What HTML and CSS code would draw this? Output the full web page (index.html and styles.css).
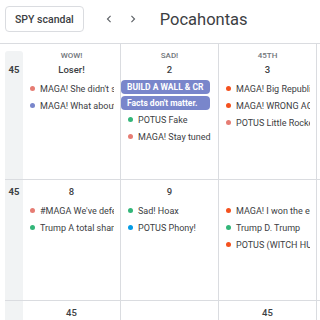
FILE: index.html
```html
<!DOCTYPE html>
<html lang="en">
<head>
    <meta charset="UTF-8">
    <meta name="viewport" content="width=device-width, initial-scale=1.0">
    <title>Calendar</title>
    <link rel="stylesheet" href="styles.css">
</head>
<body>
    <header class="toolbar">
        <button class="today-btn">SPY scandal</button>
        <div class="nav">
            <button class="icon-btn" aria-label="Previous">
                <svg viewBox="0 0 24 24" width="14" height="14"><path d="M15.41 7.41L14 6l-6 6 6 6 1.41-1.41L10.83 12z"/></svg>
            </button>
            <button class="icon-btn" aria-label="Next">
                <svg viewBox="0 0 24 24" width="14" height="14"><path d="M8.59 16.59L10 18l6-6-6-6-1.41 1.41L13.17 12z"/></svg>
            </button>
        </div>
        <h1 class="title">Pocahontas</h1>
    </header>

    <div class="month">
        <div class="week week-first">
            <div class="weeknum">45</div>
            <div class="day">
                <div class="dow">WOW!</div>
                <div class="date">Loser!</div>
                <div class="events">
                    <div class="event"><span class="dot flamingo"></span>MAGA! She didn't see it coming</div>
                    <div class="event"><span class="dot lavender"></span>MAGA! What about the emails</div>
                </div>
            </div>
            <div class="day">
                <div class="dow">SAD!</div>
                <div class="date">2</div>
                <div class="events">
                    <div class="chip">BUILD A WALL &amp; CR</div>
                    <div class="chip">Facts don't matter.</div>
                    <div class="event"><span class="dot basil"></span>POTUS Fake</div>
                    <div class="event"><span class="dot flamingo"></span>MAGA! Stay tuned</div>
                </div>
            </div>
            <div class="day">
                <div class="dow">45TH</div>
                <div class="date">3</div>
                <div class="events">
                    <div class="event"><span class="dot tangerine"></span>MAGA! Big Republican win</div>
                    <div class="event"><span class="dot tangerine"></span>MAGA! WRONG AGAIN</div>
                    <div class="event"><span class="dot flamingo"></span>POTUS Little Rocket Man</div>
                </div>
            </div>
            <div class="day"></div>
            <div class="day"></div>
            <div class="day"></div>
            <div class="day"></div>
        </div>

        <div class="week">
            <div class="weeknum">45</div>
            <div class="day">
                <div class="date">8</div>
                <div class="events">
                    <div class="event"><span class="dot flamingo"></span>#MAGA We've defeated them</div>
                    <div class="event"><span class="dot basil"></span>Trump A total sham</div>
                </div>
            </div>
            <div class="day">
                <div class="date">9</div>
                <div class="events">
                    <div class="event"><span class="dot basil"></span>Sad! Hoax</div>
                    <div class="event"><span class="dot peacock"></span>POTUS Phony!</div>
                </div>
            </div>
            <div class="day">
                <div class="date">&nbsp;</div>
                <div class="events">
                    <div class="event"><span class="dot tangerine"></span>MAGA! I won the election</div>
                    <div class="event"><span class="dot basil"></span>Trump D. Trump</div>
                    <div class="event"><span class="dot tangerine"></span>POTUS (WITCH HUNT!)</div>
                </div>
            </div>
            <div class="day"></div>
            <div class="day"></div>
            <div class="day"></div>
            <div class="day"></div>
        </div>

        <div class="week">
            <div class="weeknum"></div>
            <div class="day"><div class="date">45</div></div>
            <div class="day"></div>
            <div class="day"><div class="date">45</div></div>
            <div class="day"></div>
            <div class="day"></div>
            <div class="day"></div>
            <div class="day"></div>
        </div>
    </div>
</body>
</html>
```

FILE: styles.css
```css
body {
    margin: 0;
    font-family: Roboto, "Liberation Sans", Arial, sans-serif;
    color: #3c4043;
    background: #fff;
    width: 320px;
    height: 320px;
    overflow: hidden;
}

/* top bar */
.toolbar {
    display: flex;
    align-items: center;
    padding: 6px 0 11px 5px;
}

.today-btn {
    height: 26px;
    padding: 0 9px;
    border: 1px solid #dadce0;
    border-radius: 4px;
    background: #fff;
    font-family: inherit;
    font-size: 10.5px;
    font-weight: 500;
    color: #3c4043;
}

.nav {
    display: flex;
    margin-left: 13px;
}

.icon-btn {
    width: 24px;
    height: 24px;
    padding: 0;
    border: none;
    background: none;
    display: flex;
    align-items: center;
    justify-content: center;
}

.icon-btn svg {
    fill: #5f6368;
}

.title {
    margin: 0 0 0 15px;
    font-size: 16.5px;
    font-weight: 400;
    color: #3c4043;
}

/* month grid */
.month {
    border-top: 1px solid #dadce0;
    padding-left: 5px;
}

.week {
    display: grid;
    grid-template-columns: 18px repeat(7, 98px);
    height: 120px;
    border-bottom: 1px solid #dadce0;
}

.week-first {
    height: 135px;
}

.weeknum {
    background: #f1f3f4;
    padding-top: 5px;
    font-size: 9.5px;
    font-weight: 700;
    line-height: 14px;
    text-align: center;
}

.week-first .weeknum {
    margin-top: 7px;
    padding-top: 12px;
    border-radius: 3px 3px 0 0;
}

.day {
    border-right: 1px solid #dadce0;
    padding-top: 5px;
    min-width: 0;
}

.dow {
    font-size: 8px;
    font-weight: 500;
    line-height: 14px;
    color: #70757a;
    text-align: center;
}

.date {
    font-size: 9.5px;
    font-weight: 500;
    line-height: 14px;
    text-align: center;
}

.events {
    margin-top: 3px;
}

.event {
    display: flex;
    align-items: center;
    height: 17px;
    margin-right: 6px;
    padding-left: 7px;
    font-size: 9px;
    white-space: pre;
    overflow: hidden;
}

.dot {
    flex: none;
    width: 5px;
    height: 5px;
    margin-right: 5px;
    border-radius: 50%;
}

.chip {
    height: 14px;
    margin: 1.5px 8px 1.5px 0;
    padding-left: 6px;
    border-radius: 4px;
    background: #7986cb;
    color: #fff;
    font-size: 8.5px;
    font-weight: 700;
    line-height: 14px;
    white-space: nowrap;
    overflow: hidden;
}

.flamingo { background: #e67c73; }
.lavender { background: #7986cb; }
.basil { background: #33b679; }
.tangerine { background: #f4511e; }
.peacock { background: #039be5; }
```
